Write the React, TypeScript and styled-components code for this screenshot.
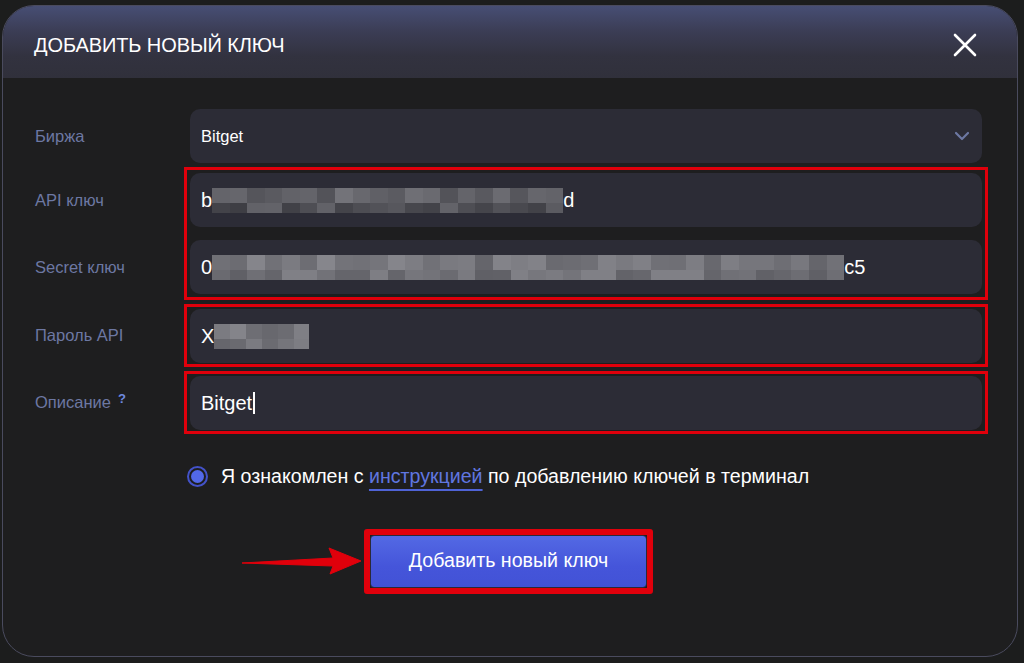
import React from 'react'
import styled, { createGlobalStyle } from 'styled-components'

const GlobalStyle = createGlobalStyle`
    html, body {
        margin: 0;
        padding: 0;
        background: #1c1d1d;
        font-family: 'Liberation Sans', Arial, sans-serif;
    }
`

const Page = styled.div`
    width: 1024px;
    height: 663px;
    padding: 5px 6px 6px 2px;
    box-sizing: border-box;
`

const Modal = styled.div`
    height: 652px;
    border: 1px solid #4a4b5e;
    border-radius: 32px;
    overflow: hidden;
    background: #1e1e1f;
    box-sizing: border-box;
    display: flex;
    flex-direction: column;
`

const Header = styled.div`
    height: 72px;
    flex-shrink: 0;
    display: flex;
    align-items: center;
    justify-content: space-between;
    padding: 6px 40px 0 31px;
    box-sizing: border-box;
    background: linear-gradient(180deg, #474e74 0%, #3b3d55 35%, #32323f 70%, #30303b 100%);
`

const Title = styled.h2`
    margin: 0;
    color: #ffffff;
    font-size: 20px;
    font-weight: 400;
    letter-spacing: -0.1px;
`

const CloseButton = styled.button`
    width: 24px;
    height: 24px;
    padding: 0;
    border: none;
    background: none;
    display: flex;
    cursor: pointer;
`

const Body = styled.div`
    display: flex;
    flex-direction: column;
    gap: 4px;
    padding: 31px 29px 0 32px;
`

const Row = styled.div`
    display: flex;
    align-items: center;
`

const LabelCol = styled.div<{ $wide?: boolean }>`
    width: ${p => (p.$wide ? '155px' : '149px')};
    flex-shrink: 0;
    display: flex;
    flex-direction: column;
    gap: 13px;
`

const Label = styled.div`
    height: 54px;
    display: flex;
    align-items: center;
    color: #6d78a3;
    font-size: 16.5px;
`

const Hint = styled.sup`
    color: #6f8ae0;
    font-size: 13px;
    font-weight: 700;
    margin-left: 7px;
    position: relative;
    top: -4px;
`

const Frame = styled.div<{ $tight?: boolean }>`
    flex: 1;
    display: flex;
    flex-direction: column;
    gap: 13px;
    border: 3px solid #e0000b;
    padding: ${p => (p.$tight ? '2px 3px 1px' : '3px')};
`

const Field = styled.div`
    height: 54px;
    border-radius: 10px;
    background: #2c2c36;
    display: flex;
    align-items: center;
    padding: 0 11px;
    color: #ffffff;
    font-size: 16.5px;
`

const Select = styled(Field)`
    flex: 1;
    justify-content: space-between;
    padding-right: 12px;
`

const BigText = styled.span`
    font-size: 20px;
`

const Caret = styled.span`
    display: inline-block;
    width: 2px;
    height: 22px;
    background: #ffffff;
    margin-left: 1px;
`

const Mosaic = styled.div<{ $cols: number }>`
    display: grid;
    grid-template-columns: repeat(${p => p.$cols}, 1fr);
    grid-template-rows: 15px 10px;
`

const Check = styled.div`
    display: flex;
    align-items: center;
    gap: 13px;
    padding: 27px 0 0 152px;
    color: #ffffff;
    font-size: 19.6px;
`

const Radio = styled.span`
    width: 21px;
    height: 21px;
    border-radius: 50%;
    border: 2px solid #4352c9;
    box-sizing: border-box;
    display: flex;
    align-items: center;
    justify-content: center;
    &::after {
        content: '';
        width: 13px;
        height: 13px;
        border-radius: 50%;
        background: #5268e8;
    }
`

const Link = styled.a`
    color: #6076e0;
    text-decoration: underline;
    text-decoration-thickness: 2px;
    text-underline-offset: 6px;
    text-decoration-color: #4f63d6;
`

const Actions = styled.div`
    display: flex;
    align-items: center;
    padding: 37px 0 0 207px;
`

const Highlight = styled.div`
    border: 6px solid #e0000b;
    border-radius: 3px;
    margin-left: 2px;
`

const Submit = styled.button`
    width: 277px;
    height: 53px;
    border: 1px solid #2a2a3a;
    border-radius: 4px;
    background: linear-gradient(180deg, #5369e4 0%, #4555da 60%, #4252d6 100%);
    color: #ffffff;
    font-family: inherit;
    font-size: 19.6px;
    padding: 0 0 3px;
    display: block;
`

const blur = (n: number, seed: number, light: boolean) => {
    const cells: string[] = []
    let s = seed
    for (let i = 0; i < n * 2; i++) {
        s = (s * 9301 + 49297) % 233280
        const r = s / 233280
        const top = i < n
        const base = light ? (top ? 100 : 95) : (top ? 80 : 60)
        const v = Math.round(base + r * (light ? 35 : 40))
        cells.push(`rgb(${v},${v},${v + 6})`)
    }
    return cells
}

const Blur = ({ width, cols, seed, light }: { width: number; cols: number; seed: number; light?: boolean }) => (
    <Mosaic $cols={cols} style={{ width }}>
        {blur(cols, seed, !!light).map((c, i) => (
            <span key={i} style={{ background: c }} />
        ))}
    </Mosaic>
)

const Chevron = () => (
    <svg width='16' height='10' viewBox='0 0 16 10'>
        <path d='M2 2 L8 8 L14 2' fill='none' stroke='#6d78a3' strokeWidth='2.2' strokeLinecap='round' strokeLinejoin='round' />
    </svg>
)

const Arrow = () => (
    <svg width='120' height='40' viewBox='0 0 120 40'>
        <path d='M0 21 L91 16 L87 6 L119 19 L88 32 L91 24 Z' fill='#e0000b' stroke='#e0000b' strokeWidth='1' strokeLinejoin='round' />
    </svg>
)

const App = () => (
    <Page>
        <GlobalStyle />
        <Modal>
            <Header>
                <Title>ДОБАВИТЬ НОВЫЙ КЛЮЧ</Title>
                <CloseButton>
                    <svg width='24' height='24' viewBox='0 0 24 24'>
                        <path d='M2 2 L22 22 M22 2 L2 22' stroke='#ffffff' strokeWidth='2.6' strokeLinecap='round' />
                    </svg>
                </CloseButton>
            </Header>
            <Body>
                <Row>
                    <LabelCol $wide>
                        <Label>Биржа</Label>
                    </LabelCol>
                    <Select style={{ marginRight: 6 }}>
                        <span>Bitget</span>
                        <Chevron />
                    </Select>
                </Row>
                <Row>
                    <LabelCol>
                        <Label>API ключ</Label>
                        <Label>Secret ключ</Label>
                    </LabelCol>
                    <Frame>
                        <Field>
                            <BigText>b</BigText>
                            <Blur width={351} cols={20} seed={7} />
                            <BigText>d</BigText>
                        </Field>
                        <Field>
                            <BigText>0</BigText>
                            <Blur width={632} cols={36} seed={3} light />
                            <BigText>c5</BigText>
                        </Field>
                    </Frame>
                </Row>
                <Row>
                    <LabelCol>
                        <Label>Пароль API</Label>
                    </LabelCol>
                    <Frame $tight>
                        <Field>
                            <BigText>X</BigText>
                            <Blur width={95} cols={6} seed={11} light />
                        </Field>
                    </Frame>
                </Row>
                <Row>
                    <LabelCol>
                        <Label>
                            Описание<Hint>?</Hint>
                        </Label>
                    </LabelCol>
                    <Frame $tight>
                        <Field>
                            <BigText>Bitget</BigText>
                            <Caret />
                        </Field>
                    </Frame>
                </Row>
                <Check>
                    <Radio />
                    <span>
                        Я ознакомлен с <Link>инструкцией</Link> по добавлению ключей в терминал
                    </span>
                </Check>
                <Actions>
                    <Arrow />
                    <Highlight>
                        <Submit>Добавить новый ключ</Submit>
                    </Highlight>
                </Actions>
            </Body>
        </Modal>
    </Page>
)

export default App
